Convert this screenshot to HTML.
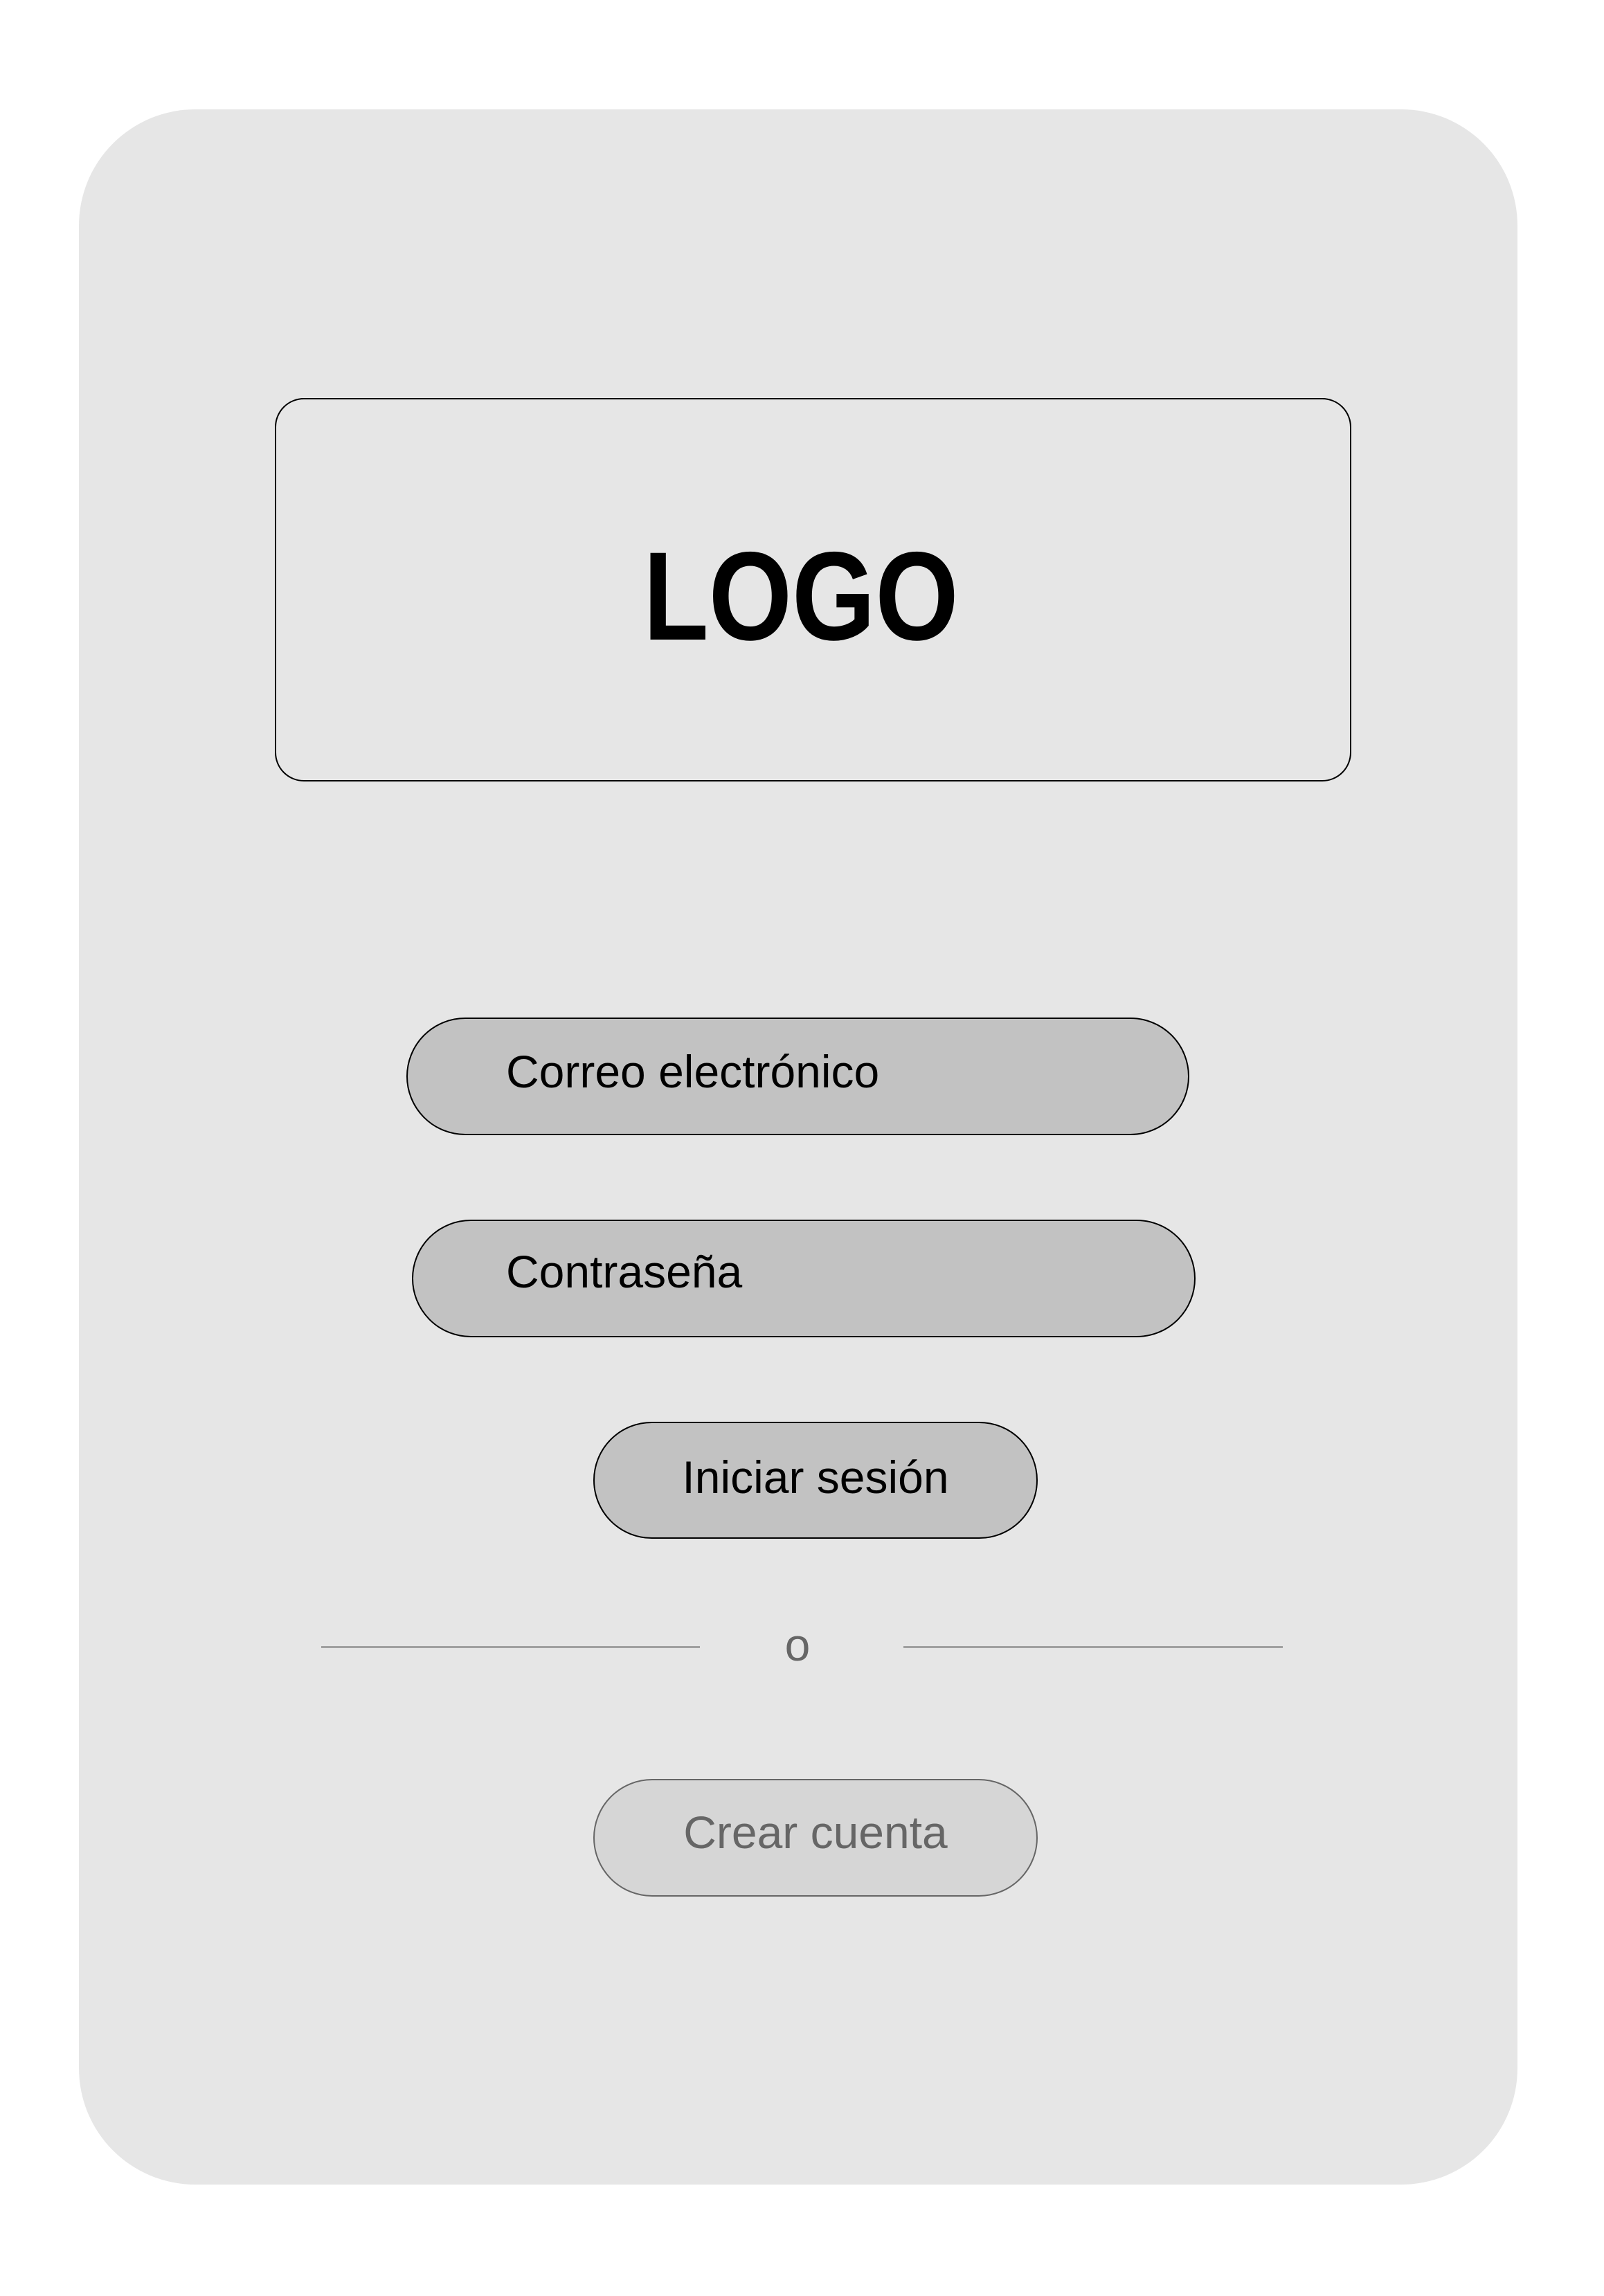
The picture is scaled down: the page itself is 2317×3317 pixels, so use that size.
<!DOCTYPE html>
<html><head><meta charset="utf-8"><style>
html,body{margin:0;padding:0;background:#fff;}
body{width:2317px;height:3317px;position:relative;overflow:hidden;font-family:"Liberation Sans",Arial,sans-serif;}
.a{position:absolute;box-sizing:border-box;}
.card{left:114px;top:158px;width:2078px;height:2998px;background:#e6e6e6;border-radius:168px;}
.logo{left:397px;top:575px;width:1555px;height:554px;border:2px solid #000;border-radius:42px;}
.logotxt{left:0;width:2317px;top:770px;text-align:center;font-size:182px;font-weight:bold;line-height:182px;color:#000;}
.logotxt span{display:inline-block;transform:scaleX(0.85);margin-left:-4px;}
.field{background:#c2c2c2;border:2px solid #000;border-radius:85px;}
.t{font-size:66px;line-height:66px;color:#000;white-space:nowrap;}
.line{height:3px;background:#a0a0a0;top:2378px;}
</style></head><body>
<div class="a card"></div>
<div class="a logo"></div>
<div class="a logotxt"><span>LOGO</span></div>

<div class="a field" style="left:587px;top:1470px;width:1131px;height:170px;"></div>
<div class="a t" style="left:731px;top:1515px;">Correo electrónico</div>

<div class="a field" style="left:595px;top:1762px;width:1132px;height:170px;"></div>
<div class="a t" style="left:731px;top:1804px;">Contraseña</div>

<div class="a field" style="left:857px;top:2054px;width:642px;height:169px;"></div>
<div class="a t" style="left:857px;width:642px;text-align:center;top:2101px;">Iniciar sesión</div>

<div class="a line" style="left:464px;width:547px;"></div>
<div class="a line" style="left:1305px;width:548px;"></div>
<div class="a t" style="left:1052px;width:200px;text-align:center;top:2343px;font-size:66px;color:#666;">o</div>

<div class="a" style="left:857px;top:2570px;width:642px;height:170px;background:#d6d6d6;border:2px solid #666;border-radius:85px;"></div>
<div class="a t" style="left:857px;width:642px;text-align:center;top:2614px;color:#666;">Crear cuenta</div>
</body></html>
